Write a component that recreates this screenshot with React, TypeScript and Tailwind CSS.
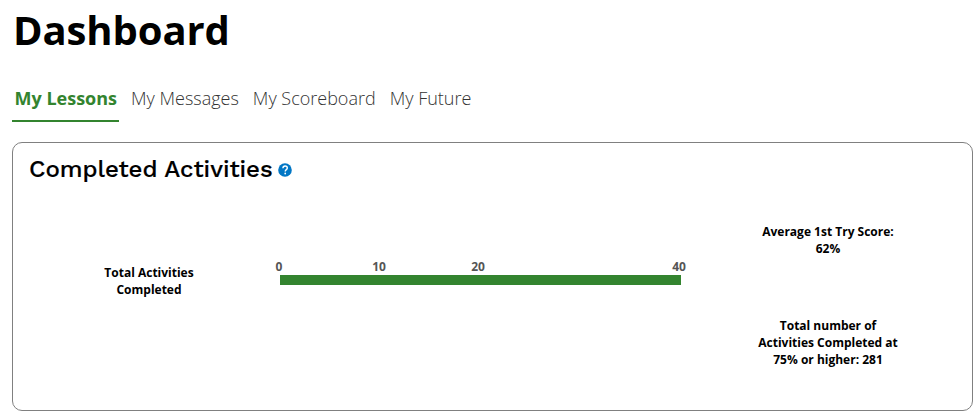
const tabs = ["My Lessons", "My Messages", "My Scoreboard", "My Future"];

const ticks = [
  { label: "0", className: "left-[-1px]" },
  { label: "10", className: "left-[99px]" },
  { label: "20", className: "left-[198px]" },
  { label: "40", className: "left-[399px]" },
];

function HelpIcon() {
  return (
    <svg viewBox="0 0 14 14" className="mt-[2px] h-[14px] w-[14px]" aria-label="Help">
      <circle cx="7" cy="7" r="6.8" fill="#0277c5" />
      <path d="M4.900 5.200C5 3.700 5.800 3 7.100 3c1.300 0 2.200.8 2.200 1.900 0 1.700-2.100 1.700-2.100 3.500" fill="none" stroke="#fff" strokeWidth="1.400" />
      <circle cx="7.200" cy="10.500" r="0.900" fill="#fff" />
    </svg>
  );
}

export default function App() {
  return (
    <main className="h-[419px] overflow-hidden bg-white pl-3 pr-[7px] font-['Open_Sans',sans-serif] text-black">
      <h1 className="h-[78px] pl-px pt-[3px] text-[40px] font-bold leading-[54px] tracking-[-0.1px]">Dashboard</h1>
      <nav className="flex h-[44px] gap-[10px]">
        {tabs.map((tab, i) => (
          <a
            key={tab}
            className={
              i === 0
                ? "border-b-2 border-[#33842f] pl-[2.5px] pr-[2px] pt-[7px] text-lg font-bold leading-[27px] text-[#33842f]"
                : "px-[2px] pt-[7px] text-lg font-light leading-[27px] text-[#333]"
            }
          >
            {tab}
          </a>
        ))}
      </nav>

      <section className="mt-5 h-[269px] rounded-[10px] border border-[#808080] px-4 pt-[10px]">
        <div className="flex h-8 items-center gap-[5px]">
          <h2 className="font-['Work_Sans','Inter',sans-serif] text-2xl font-medium tracking-[-0.04px] [-webkit-text-stroke:0.15px_black]">
            Completed Activities
          </h2>
          <HelpIcon />
        </div>
        <div className="flex h-[200px] text-xs font-bold leading-[17px]">
          <div className="w-[240px] shrink-0 pt-[79px] text-center">
            Total Activities
            <br />
            Completed
          </div>
          <div className="w-[421px] shrink-0 pl-[11px] pt-[73px]">
            <div className="relative h-[17px] text-[#555]">
              {ticks.map((tick) => (
                <span key={tick.label} className={`absolute -translate-x-1/2 ${tick.className}`}>
                  {tick.label}
                </span>
              ))}
            </div>
            <div className="h-[10px] w-[401px] bg-[#33842f]" />
          </div>
          <div className="flex w-[276px] shrink-0 flex-col gap-[60px] pt-[38px] text-center">
            <p>
              Average 1st Try Score:
              <br />
              62%
            </p>
            <p>
              Total number of
              <br />
              Activities Completed at
              <br />
              75% or higher: 281
            </p>
          </div>
        </div>
      </section>
    </main>
  );
}
